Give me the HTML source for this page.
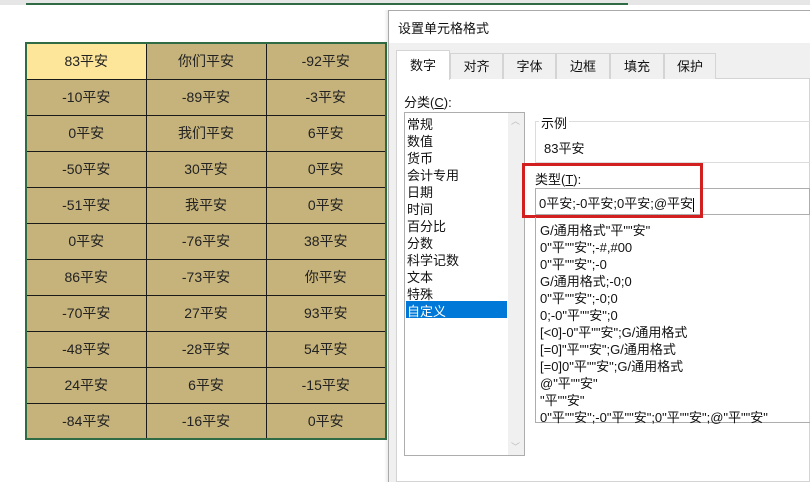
<!DOCTYPE html>
<html><head><meta charset="utf-8"><style>
*{margin:0;padding:0;box-sizing:border-box}
body{width:810px;height:482px;overflow:hidden;background:#fff;position:relative;font-family:"Liberation Sans","Noto Sans CJK SC",sans-serif;font-size:13px;color:#111}
.a{position:absolute;white-space:nowrap}
table{position:absolute;left:25px;top:42px;border-collapse:collapse;border:2px solid #2f6b45}
td{width:120px;height:36px;background:#c6b37b;border:1px solid #1a1a1a;text-align:center;font-size:14px;color:#222}
td.s{background:#fde69a}
.tab{position:absolute;top:53px;height:26px;border:1px solid #d4d4d4;border-bottom:none;background:#f0f0f0;text-align:center;line-height:25px}
.li{position:absolute;left:407px;font-size:13px}
.ty{position:absolute;left:540px;font-size:13px}
</style></head><body>
<div class="a" style="left:0;top:0;width:810px;height:5px;background:#e6e6e6"></div>
<div class="a" style="left:26px;top:3px;width:602px;height:2px;background:#2f6b45"></div>
<table>
<tr><td class="s">83平安</td><td>你们平安</td><td>-92平安</td></tr>
<tr><td>-10平安</td><td>-89平安</td><td>-3平安</td></tr>
<tr><td>0平安</td><td>我们平安</td><td>6平安</td></tr>
<tr><td>-50平安</td><td>30平安</td><td>0平安</td></tr>
<tr><td>-51平安</td><td>我平安</td><td>0平安</td></tr>
<tr><td>0平安</td><td>-76平安</td><td>38平安</td></tr>
<tr><td>86平安</td><td>-73平安</td><td>你平安</td></tr>
<tr><td>-70平安</td><td>27平安</td><td>93平安</td></tr>
<tr><td>-48平安</td><td>-28平安</td><td>54平安</td></tr>
<tr><td>24平安</td><td>6平安</td><td>-15平安</td></tr>
<tr><td>-84平安</td><td>-16平安</td><td>0平安</td></tr>
</table>
<!-- dialog -->
<div class="a" style="left:384px;top:10px;width:6px;height:472px;background:linear-gradient(90deg,rgba(0,0,0,0),rgba(0,0,0,.12))"></div>
<div class="a" style="left:388px;top:10px;width:422px;height:472px;background:#f0f0f0;border-left:1px solid #aaa;border-top:1px solid #aaa"></div>
<div class="a" style="left:389px;top:11px;width:421px;height:32px;background:#fff"></div>
<div class="a" style="left:398px;top:18px;font-size:13px">设置单元格格式</div>
<div class="a" style="left:396px;top:78px;width:414px;height:404px;background:#fff;border:1px solid #d4d4d4"></div>
<div class="tab" style="left:396px;width:54px;top:50px;height:30px;background:#fff;line-height:30px;z-index:2">数字</div>
<div class="tab" style="left:450px;width:53px">对齐</div>
<div class="tab" style="left:503px;width:53px">字体</div>
<div class="tab" style="left:556px;width:54px">边框</div>
<div class="tab" style="left:610px;width:54px">填充</div>
<div class="tab" style="left:664px;width:52px">保护</div>
<div class="a" style="left:404px;top:92px">分类(<u>C</u>):</div>
<div class="a" style="left:404px;top:112px;width:121px;height:344px;border:1px solid #adadad;background:#fff"></div>
<div class="a" style="left:508px;top:113px;width:16px;height:342px;background:#f0f0f0"></div>
<div class="a" style="left:511px;top:114px;font-size:9px;color:#bbb">︿</div>
<div class="a" style="left:511px;top:440px;font-size:9px;color:#bbb">﹀</div>
<div class="a" style="left:406px;top:301px;width:101px;height:17px;background:#0078d7"></div>
<div class="li" style="top:114px">常规</div>
<div class="li" style="top:131px">数值</div>
<div class="li" style="top:148px">货币</div>
<div class="li" style="top:165px">会计专用</div>
<div class="li" style="top:182px">日期</div>
<div class="li" style="top:199px">时间</div>
<div class="li" style="top:216px">百分比</div>
<div class="li" style="top:233px">分数</div>
<div class="li" style="top:250px">科学记数</div>
<div class="li" style="top:267px">文本</div>
<div class="li" style="top:284px">特殊</div>
<div class="li" style="top:301px;color:#fff">自定义</div>
<div class="a" style="left:535px;top:121px;width:275px;height:42px;border:1px solid #dcdcdc;border-right:none"></div>
<div class="a" style="left:539px;top:113px;background:#fff;padding:0 2px">示例</div>
<div class="a" style="left:544px;top:138px">83平安</div>
<div class="a" style="left:535px;top:169px">类型(<u>T</u>):</div>
<div class="a" style="left:535px;top:188px;width:275px;height:27px;border:1px solid #adadad;background:#fff"></div>
<div class="a" style="left:539px;top:193px">0平安;-0平安;0平安;@平安<span style="display:inline-block;width:1px;height:14px;background:#000;vertical-align:middle"></span></div>
<div class="a" style="left:522px;top:163px;width:181px;height:55px;border:3px solid #d21f1f"></div>
<div class="a" style="left:535px;top:217px;width:275px;height:206px;border:1px solid #adadad;border-top:none;border-right:none"></div>
<div class="ty" style="top:220px">G/通用格式"平""安"</div>
<div class="ty" style="top:237px">0"平""安";-#,#00</div>
<div class="ty" style="top:254px">0"平""安";-0</div>
<div class="ty" style="top:271px">G/通用格式;-0;0</div>
<div class="ty" style="top:288px">0"平""安";-0;0</div>
<div class="ty" style="top:305px">0;-0"平""安";0</div>
<div class="ty" style="top:322px">[&lt;0]-0"平""安";G/通用格式</div>
<div class="ty" style="top:339px">[=0]"平""安";G/通用格式</div>
<div class="ty" style="top:356px">[=0]0"平""安";G/通用格式</div>
<div class="ty" style="top:373px">@"平""安"</div>
<div class="ty" style="top:390px">"平""安"</div>
<div class="ty" style="top:407px">0"平""安";-0"平""安";0"平""安";@"平""安"</div>
</body></html>
